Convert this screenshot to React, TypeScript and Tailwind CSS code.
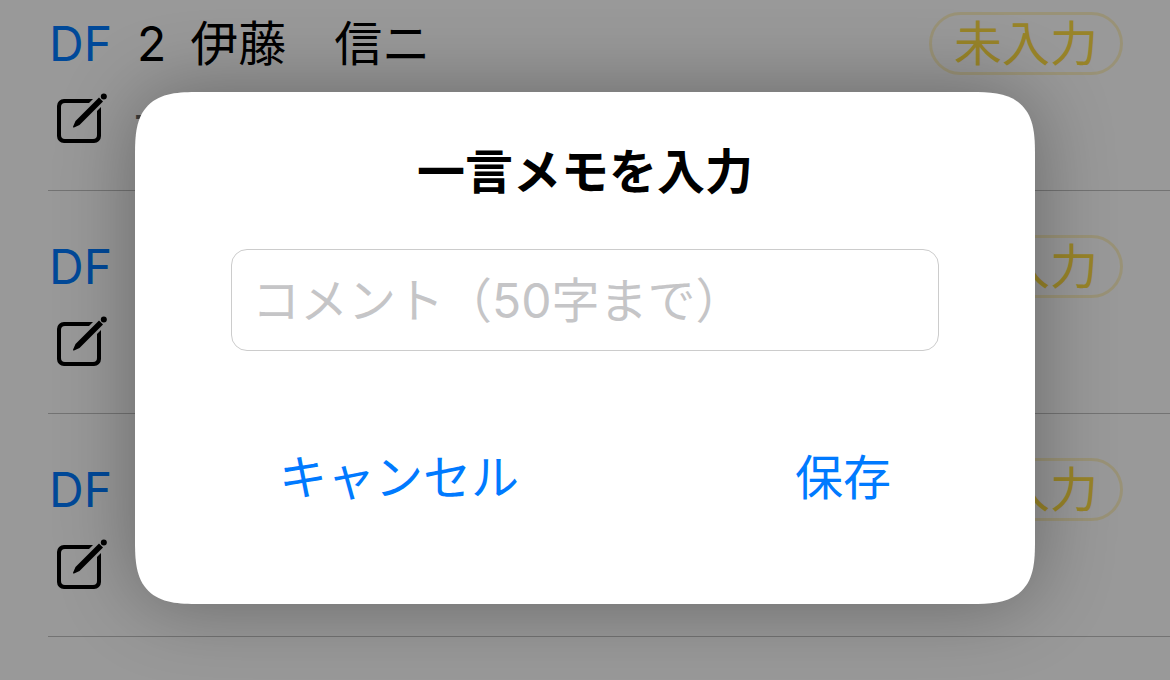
import { useState } from 'react';

const players = [
  { id: 1, position: 'DF', number: 2, name: '伊藤　信ニ', memo: '一', status: '未入力' },
  { id: 2, position: 'DF', number: null, name: '', memo: '', status: '未入力' },
  { id: 3, position: 'DF', number: null, name: '', memo: '', status: '未入力' },
];

function EditIcon() {
  return (
    <svg viewBox="0 0 56 56" className="size-14" fill="currentColor" aria-hidden="true">
      <path d="M39 9H10a7 7 0 0 0-7 7v30a7 7 0 0 0 7 7h30a7 7 0 0 0 7-7V17l-4 4v24a4 4 0 0 1-4 4H11a4 4 0 0 1-4-4V17a4 4 0 0 1 4-4h24z" />
      <path d="M45 7.500l4 4L25.500 35l-5.500 2.500c-.7.300-1.200-.200-.9-.9L21.500 31z" />
      <circle cx="49.800" cy="6.500" r="3" />
    </svg>
  );
}

function PlayerRow({ player }: { player: (typeof players)[number] }) {
  return (
    <li className="ml-12 border-b border-[#c0c0c0] pt-11 first:pt-3">
      <div className="flex items-center pr-[47px]">
        <span className="w-[89px] pl-px text-[#007aff]">{player.position}</span>
        <span className="flex flex-1 gap-6">
          {player.number !== null && <span>{player.number}</span>}
          <span>{player.name}</span>
        </span>
        <span className="rounded-full border-[3px] border-[#fedc45]/30 px-[22px] leading-[57px] text-[#fedc45]">
          {player.status}
        </span>
      </div>
      <div className="mt-[15px] flex h-[100px] items-start gap-6">
        <button type="button" aria-label="メモを編集" className="ml-1.5">
          <EditIcon />
        </button>
        <span className="text-[#666]">{player.memo}</span>
      </div>
    </li>
  );
}

export default function App() {
  const [memo, setMemo] = useState('');

  return (
    <div className="relative min-h-screen overflow-hidden bg-white font-[Inter,'Noto_Sans_CJK_JP',sans-serif] text-[48px] leading-[56px] text-black">
      <ul>
        {players.map((player) => (
          <PlayerRow key={player.id} player={player} />
        ))}
      </ul>

      {/* modal */}
      <div className="absolute inset-0 flex items-center justify-center bg-black/40 pt-4">
        <div
          role="dialog"
          aria-labelledby="memo-title"
          className="w-10/13 rounded-[46px] bg-white px-24 pt-[52px] pb-[98px] shadow-[0_0_80px_rgba(0,0,0,0.33)] supports-[corner-shape:squircle]:rounded-[64px] supports-[corner-shape:squircle]:[corner-shape:superellipse(1.58)]"
        >
          <h2 id="memo-title" className="text-center font-bold">
            一言メモを入力
          </h2>
          <input
            type="text"
            aria-labelledby="memo-title"
            maxLength={50}
            value={memo}
            onChange={(e) => setMemo(e.target.value)}
            placeholder="コメント（50字まで）"
            className="mt-[49px] block h-[102px] w-full rounded-2xl border border-[#cccccc] px-5 outline-none placeholder:text-[#c5c5c7]"
          />
          <div className="mt-[99px] flex justify-between px-12 text-[#007aff]">
            <button type="button">キャンセル</button>
            <button type="button">保存</button>
          </div>
        </div>
      </div>
    </div>
  );
}
